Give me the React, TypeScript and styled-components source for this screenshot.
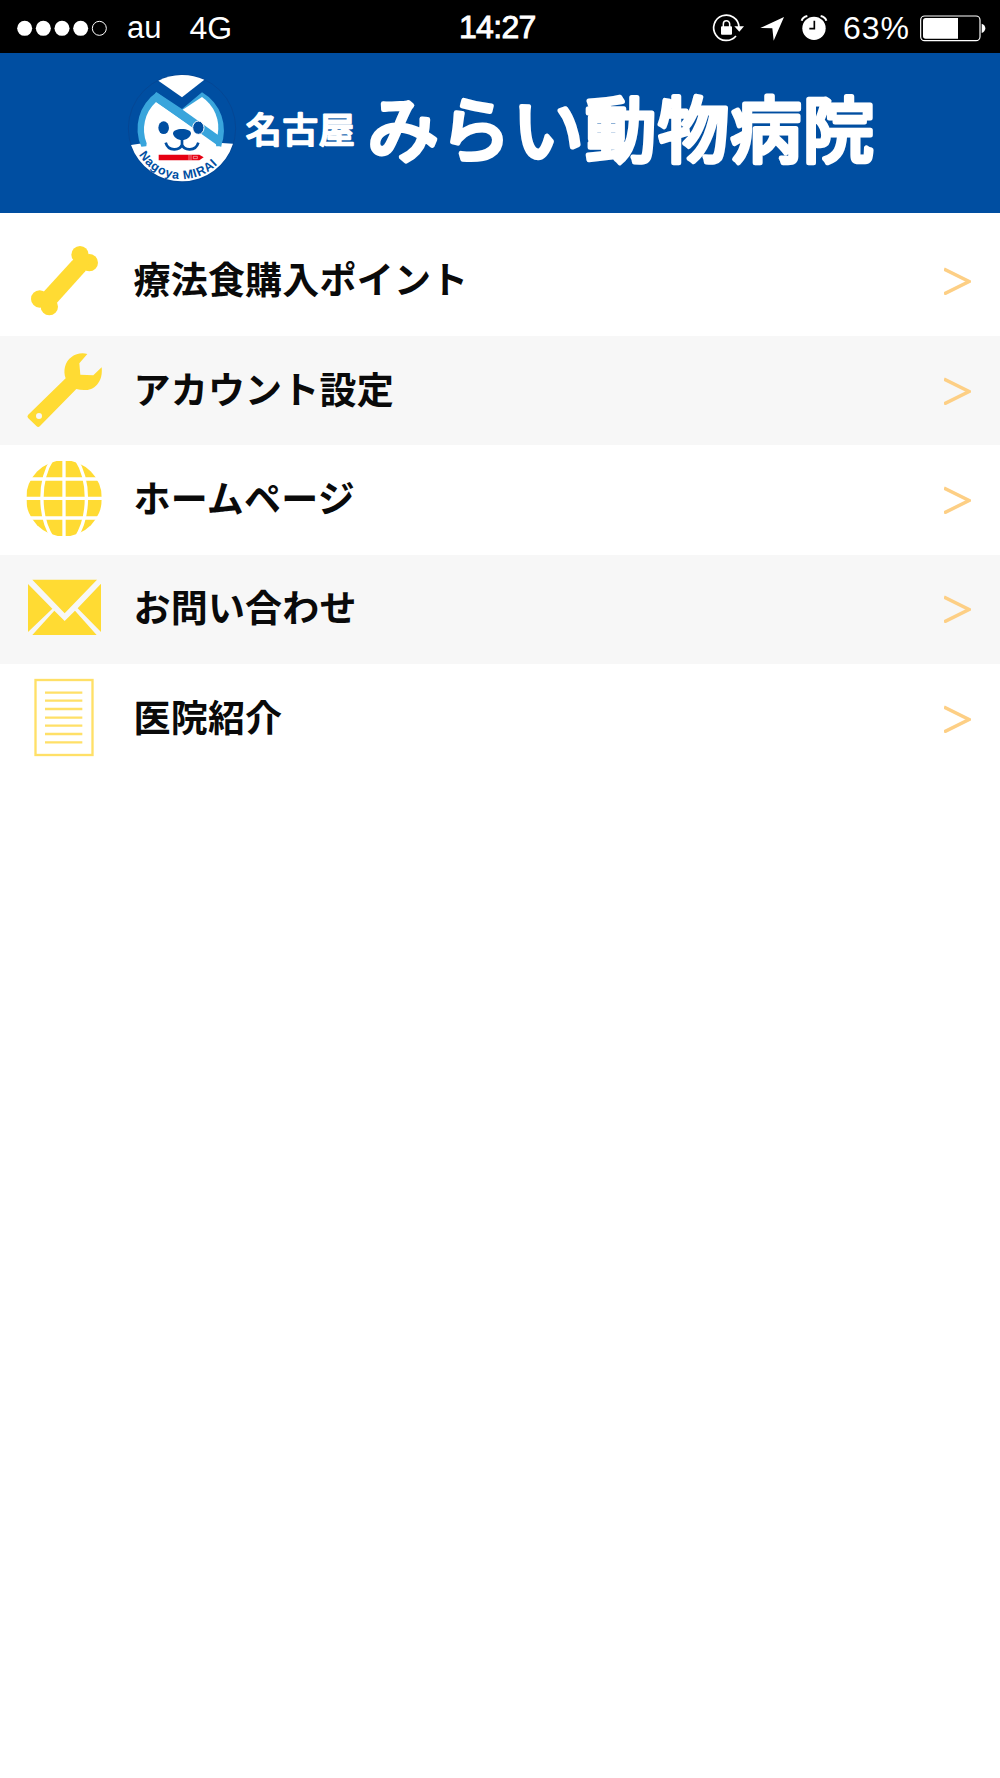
import React from "react";
import styled, { createGlobalStyle } from "styled-components";

const YELLOW = "#ffdb33";

const GlobalStyle = createGlobalStyle`
  *, *::before, *::after { box-sizing: border-box; }
  body { margin: 0; background: #fff; }
`;

const Screen = styled.div`
  width: 1000px;
  min-height: 1778px;
  background: #fff;
  color: #0a0a0a;
  font-family: "Liberation Sans", "Noto Sans CJK JP", sans-serif;
`;

const StatusBar = styled.div`
  display: grid;
  grid-template-columns: 459px 1fr auto;
  align-items: center;
  height: 53.33px;
  padding-right: 13.5px;
  background: #000;
  color: #fff;
  font-size: 32px;
  line-height: 54px;
  white-space: nowrap;
`;

const StatusGroup = styled.div`
  display: flex;
  align-items: center;
  height: 53px;
`;

const StatusText = styled.span<{ $before?: number; $after?: number; $spacing?: number; $size?: number }>`
  margin-left: ${(p) => p.$before ?? 0}px;
  margin-right: ${(p) => p.$after ?? 0}px;
  letter-spacing: ${(p) => p.$spacing ?? 0}px;
  font-size: ${(p) => p.$size ?? 31}px;
  padding-top: 1px;
`;

const Clock = styled.span`
  font-size: 32px;
  letter-spacing: -0.7px;
  -webkit-text-stroke: 0.9px #fff;
`;

const Header = styled.header`
  display: flex;
  align-items: flex-start;
  height: 159.67px;
  padding: 10.67px 0 0 120px;
  background: #004ea1;
`;

const Wordmark = styled.svg`
  margin-left: -10px;
  overflow: visible;
  fill: #fff;
  stroke: #fff;
  stroke-linejoin: round;
  stroke-linecap: round;
  font-family: "Noto Sans CJK JP", sans-serif;
`;

const Menu = styled.nav`
  display: flex;
  flex-direction: column;
  padding-top: 13.67px;
`;

const Row = styled.a<{ $shaded: boolean }>`
  display: flex;
  align-items: center;
  height: 109.33px;
  padding-right: 29.5px;
  background: ${(p) => (p.$shaded ? "#f7f7f7" : "#fff")};
`;

const Label = styled.span`
  flex: 1;
  padding: 0 0 6px 13.5px;
  font-family: "Noto Sans CJK JP", sans-serif;
  font-size: 37px;
  letter-spacing: 0.2px;
  line-height: 48px;
  font-weight: 700;
`;

const RowIcon = ({ children }: { children: React.ReactNode }) => (
  <svg width="120" height="109.33" viewBox="0 0 360 328" fill={YELLOW}>
    {children}
  </svg>
);

const Bone = () => (
  <RowIcon>
    <circle cx="240" cy="83" r="26" />
    <circle cx="268" cy="107" r="26" />
    <circle cx="119" cy="216" r="26" />
    <circle cx="148" cy="239" r="26" />
    <path d="M216 101L240 83L268 108L256 133L171 227L148 240L119 216L131 194Z" />
  </RowIcon>
);

const Wrench = () => (
  <RowIcon>
    <path
      fillRule="evenodd"
      d="M262 54C233 46 203 63 195 92C192 104 193 117 197 127L84 237Q80 242 85 247L110 271Q115 275 120 270L229 159C250 165 276 164 291 146C304 132 307 112 305 94L280 118L241 116L238 82ZM117 231A9 9 0 1 0 117 249A9 9 0 1 0 117 231Z"
    />
  </RowIcon>
);

const Globe = () => (
  <RowIcon>
    <defs>
      <clipPath id="globe-disc">
        <circle cx="192" cy="160" r="114" />
      </clipPath>
    </defs>
    <rect x="80" y="48" width="225" height="225" clipPath="url(#globe-disc)" />
    <g fill="none" stroke="#fff" strokeWidth="10">
      <path d="M192 40V280M74 160H312M74 102H312M74 219H312" />
      <path d="M158 40C115 106 115 213 158 280M227 40C270 106 270 213 227 280" />
    </g>
  </RowIcon>
);

const Envelope = () => (
  <RowIcon>
    <path d="M97 74H291L194 175ZM84 87L157 161L84 231ZM303 86V231L233 160ZM163 167L194 198L225 167L290 240H97Z" />
  </RowIcon>
);

const Document = () => (
  <RowIcon>
    <g fill="none" stroke="#ffe067" strokeWidth="7">
      <rect x="106.500" y="48" width="171" height="225" />
      <path d="M135 86H247M135 110H247M135 135H247M135 161H247M135 185H247M135 210H247M135 235H247" />
    </g>
  </RowIcon>
);

const Chevron = () => (
  <svg width="27" height="28" viewBox="0 0 27 28">
    <path d="M0 2L25 14.500L0 27" fill="none" stroke="#fdcf85" strokeWidth="3.500" />
  </svg>
);

const Logo = () => (
  <svg width="130" height="130" viewBox="0 0 390 390">
    <defs>
      <path id="motto-arc" d="M57 272A150 150 0 0 0 317 268" />
    </defs>
    <circle cx="186" cy="193" r="161" fill="#004ea1" stroke="#07438d" strokeWidth="2" />
    <path d="M33 243L78 236H293L339 239A161 161 0 0 1 33 243Z" fill="#fff" />
    <path d="M115 50A161 161 0 0 1 253 47L186 100Z" fill="#fff" />
    <path d="M64 248A132 132 0 0 1 110 85L186 135L246 85A132 132 0 0 1 303 247L285 247L78 247Z" fill="#39a5dc" />
    <path d="M80 238A112 112 0 0 1 108 114L288 238L289 256H78Z" fill="#fff" />
    <path d="M188 137L246 99A112 112 0 0 1 293 212Z" fill="#fff" />
    <path d="M108 84L304 225V248L292 244L98 106Z" fill="#39a5dc" />
    <g fill="#004ea1">
      <ellipse cx="131" cy="191" rx="16" ry="19" />
      <ellipse cx="235" cy="191" rx="17" ry="20" stroke="#fff" strokeWidth="3" />
      <path d="M186 195C201 195 213 200 213 208C213 218 199 229 186 229C173 229 159 218 159 208C159 200 171 195 186 195Z" />
    </g>
    <path d="M186 224V242M137 236Q143 257 164 256Q181 255 186 242Q191 255 208 256Q229 257 235 236" fill="none" stroke="#004ea1" strokeWidth="8" />
    <path d="M116 272H238L251 280L238 289H116Z" fill="#e60012" />
    <path d="M207 272V289M213 272V289M220 277H232V284H220Z" fill="none" stroke="#fff" strokeWidth="1.500" />
    <text fill="#004ea1" fontFamily="Liberation Sans, sans-serif" fontSize="37" fontWeight="700" letterSpacing="2.200">
      <textPath href="#motto-arc">Nagoya MIRAI</textPath>
    </text>
  </svg>
);

const ClinicTitle = () => (
  <Wordmark width="650" height="130" viewBox="0 0 650 130">
    <text x="6" y="79" fontSize="35.500" fontWeight="400" strokeWidth="2.400" letterSpacing="1">
      名古屋
    </text>
    <text x="127.500" y="92" fontSize="71" fontWeight="400" strokeWidth="5" letterSpacing="1.600">
      みらい動物病院
    </text>
  </Wordmark>
);

const Signal = () => (
  <svg width="110" height="53" viewBox="0 0 330 159">
    {[74, 130, 186, 242].map((x) => (
      <circle key={x} cx={x} cy="82" r="22.500" fill="#fff" />
    ))}
    <circle cx="298" cy="82" r="21" fill="none" stroke="#fff" strokeWidth="3" />
  </svg>
);

const SystemIcons = () => (
  <svg width="130" height="53" viewBox="0 0 390 159" fill="#fff">
    <path d="M117 78A38 38 0 1 0 108 105" fill="none" stroke="#fff" strokeWidth="5" />
    <path d="M103 76H132L118 92Z" />
    <rect x="63" y="76" width="33" height="25" rx="3" />
    <path d="M70 78V69A9.500 9.500 0 0 1 89 69V78" fill="none" stroke="#fff" strokeWidth="4.500" />
    <path d="M181 81L252 48L221 119L217 82Z" />
    <circle cx="342" cy="82" r="35" />
    <path d="M343 59V83H328" fill="none" stroke="#000" strokeWidth="5" />
    <path d="M305 59Q308 48 322 45M362 45Q376 48 379 59" fill="none" stroke="#fff" strokeWidth="6" />
  </svg>
);

const Battery = () => (
  <svg width="67" height="53" viewBox="0 0 201 159" fill="#fff">
    <rect x="2" y="45" width="178" height="74" rx="12" fill="none" stroke="#fff" strokeWidth="3.500" />
    <path d="M17 51H114V113H17Q9 113 9 105V59Q9 51 17 51Z" />
    <path d="M185 68Q196 72 196 82Q196 92 185 96Z" />
  </svg>
);

const items = [
  { label: "療法食購入ポイント", Icon: Bone },
  { label: "アカウント設定", Icon: Wrench },
  { label: "ホームページ", Icon: Globe },
  { label: "お問い合わせ", Icon: Envelope },
  { label: "医院紹介", Icon: Document },
];

export default function App() {
  return (
    <Screen>
      <GlobalStyle />
      <StatusBar>
        <StatusGroup>
          <Signal />
          <StatusText $before={17}>au</StatusText>
          <StatusText $before={28} $size={32}>4G</StatusText>
        </StatusGroup>
        <Clock>14:27</Clock>
        <StatusGroup>
          <SystemIcons />
          <StatusText $before={12.5} $after={9.5} $spacing={1} $size={32}>63%</StatusText>
          <Battery />
        </StatusGroup>
      </StatusBar>
      <Header>
        <Logo />
        <ClinicTitle />
      </Header>
      <Menu>
        {items.map(({ label, Icon }, i) => (
          <Row key={label} $shaded={i % 2 === 1}>
            <Icon />
            <Label>{label}</Label>
            <Chevron />
          </Row>
        ))}
      </Menu>
    </Screen>
  );
}
